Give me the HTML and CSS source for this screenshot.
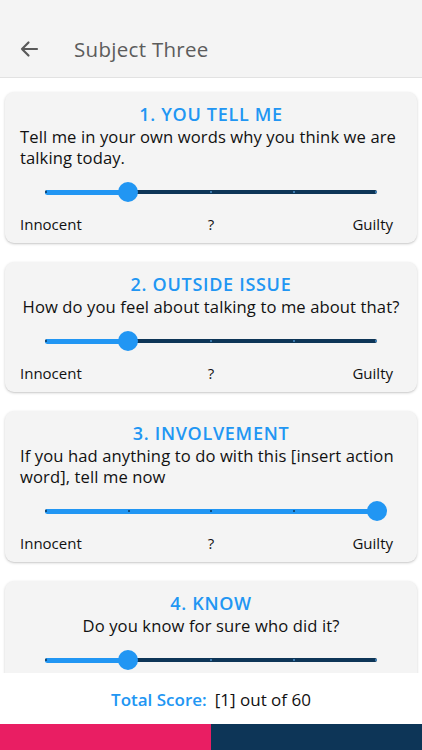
FILE: index.html
```html
<!DOCTYPE html>
<html>
<head>
<meta charset="utf-8">
<link rel="stylesheet" href="styles.css">
</head>
<body>
<div class="app">
  <header class="appbar">
    <svg class="back" width="24" height="24" viewBox="0 0 24 24"><path d="M20 12H5M11.5 5.5L5 12l6.5 6.5" fill="none" stroke="#5a5a5a" stroke-width="2.2" stroke-linecap="round" stroke-linejoin="round"/></svg>
    <h1 class="title">Subject Three</h1>
  </header>
  <main class="list">
    <section class="card">
      <h2 class="qtitle">1. YOU TELL ME</h2>
      <p class="qtext">Tell me in your own words why you think we are talking today.</p>
      <div class="slider">
        <div class="track"><div class="active" style="width:25%"></div></div>
        <div class="ticks"><i class="on"></i><i></i><i></i><i></i><i></i></div>
        <div class="thumb" style="left:25%"></div>
      </div>
      <div class="labels"><span>Innocent</span><span class="mid">?</span><span>Guilty</span></div>
    </section>
    <section class="card">
      <h2 class="qtitle">2. OUTSIDE ISSUE</h2>
      <p class="qtext">How do you feel about talking to me about that?</p>
      <div class="slider">
        <div class="track"><div class="active" style="width:25%"></div></div>
        <div class="ticks"><i class="on"></i><i></i><i></i><i></i><i></i></div>
        <div class="thumb" style="left:25%"></div>
      </div>
      <div class="labels"><span>Innocent</span><span class="mid">?</span><span>Guilty</span></div>
    </section>
    <section class="card">
      <h2 class="qtitle">3. INVOLVEMENT</h2>
      <p class="qtext">If you had anything to do with this [insert action word], tell me now</p>
      <div class="slider">
        <div class="track"><div class="active" style="width:100%"></div></div>
        <div class="ticks"><i class="on"></i><i class="on"></i><i class="on"></i><i class="on"></i><i class="on"></i></div>
        <div class="thumb" style="left:100%"></div>
      </div>
      <div class="labels"><span>Innocent</span><span class="mid">?</span><span>Guilty</span></div>
    </section>
    <section class="card">
      <h2 class="qtitle">4. KNOW</h2>
      <p class="qtext">Do you know for sure who did it?</p>
      <div class="slider">
        <div class="track"><div class="active" style="width:25%"></div></div>
        <div class="ticks"><i class="on"></i><i></i><i></i><i></i><i></i></div>
        <div class="thumb" style="left:25%"></div>
      </div>
    </section>
  </main>
  <footer class="score">
    <span class="score-label">Total Score:</span>
    <span class="score-value">[1] out of 60</span>
  </footer>
  <div class="bottombar"><div class="pink"></div><div class="navy"></div></div>
</div>
</body>
</html>
```
FILE: styles.css
```css
* { box-sizing: border-box; }
html, body { margin: 0; padding: 0; }
body {
  font-family: "Open Sans", "Noto Sans", sans-serif;
  color: #111;
  background: #fff;
}
.app {
  width: 422px;
  height: 750px;
  display: flex;
  flex-direction: column;
  overflow: hidden;
}
.appbar {
  height: 78px;
  flex: none;
  background: #f4f4f4;
  border-bottom: 1px solid #e2e2e2;
  display: flex;
  align-items: center;
  padding: 21px 0 0 17px;
}
.back { display: block; }
.title {
  margin: 0 0 0 33px;
  font-size: 20.5px;
  font-weight: 400;
  color: #5c5c5c;
  letter-spacing: 0.3px;
}
.list {
  flex: 1;
  overflow: hidden;
  padding: 14px 5px 0;
  display: flex;
  flex-direction: column;
  gap: 19px;
}
.card {
  flex: none;
  background: #f4f4f4;
  border-radius: 9px;
  box-shadow: 0 1px 3px rgba(0,0,0,0.18), 0 1px 1px rgba(0,0,0,0.06);
  padding: 10px 15px 9px;
}
.qtitle {
  margin: 0;
  text-align: center;
  font-size: 18px;
  line-height: 24px;
  font-weight: 600;
  color: #2196f3;
  letter-spacing: 0.7px;
}
.qtext {
  margin: 0 auto;
  width: fit-content;
  font-size: 16.6px;
  line-height: 21px;
  letter-spacing: 0.1px;
  color: #111;
}
.slider {
  position: relative;
  height: 44px;
  margin: 0 25px;
}
.track {
  position: absolute;
  left: 0; right: 0;
  top: 22px;
  height: 4px;
  border-radius: 2px;
  background: #0d3557;
}
.active {
  height: 5px;
  margin-top: -0.5px;
  border-radius: 3px;
  background: #2196f3;
}
.ticks {
  position: absolute;
  left: 0; right: 0;
  top: 23px;
  height: 2px;
  display: flex;
  justify-content: space-between;
}
.ticks i {
  width: 2px;
  height: 2px;
  border-radius: 1px;
  background: #4a8fc9;
}
.ticks i.on { background: #0d3557; }
.thumb {
  position: absolute;
  top: 14px;
  width: 20px;
  height: 20px;
  margin-left: -10px;
  border-radius: 50%;
  background: #2196f3;
}
.labels {
  margin-top: 2px;
  display: flex;
  justify-content: space-between;
  font-size: 15px;
  line-height: 20px;
  color: #111;
}
.labels span { flex: 1; }
.labels span:first-child { padding-right: 9px; }
.labels .mid { text-align: center; flex: none; }
.labels span:last-child { text-align: right; padding-right: 9px; }
.score {
  height: 51px;
  flex: none;
  background: #fff;
  display: flex;
  align-items: center;
  justify-content: center;
  gap: 8px;
  font-size: 17px;
  padding-top: 1px;
}
.score-label { color: #2196f3; font-weight: 600; }
.score-value { color: #111; }
.bottombar {
  height: 26px;
  flex: none;
  display: flex;
}
.pink { width: 211px; background: #e91e63; }
.navy { flex: 1; background: #0d3557; }
```
